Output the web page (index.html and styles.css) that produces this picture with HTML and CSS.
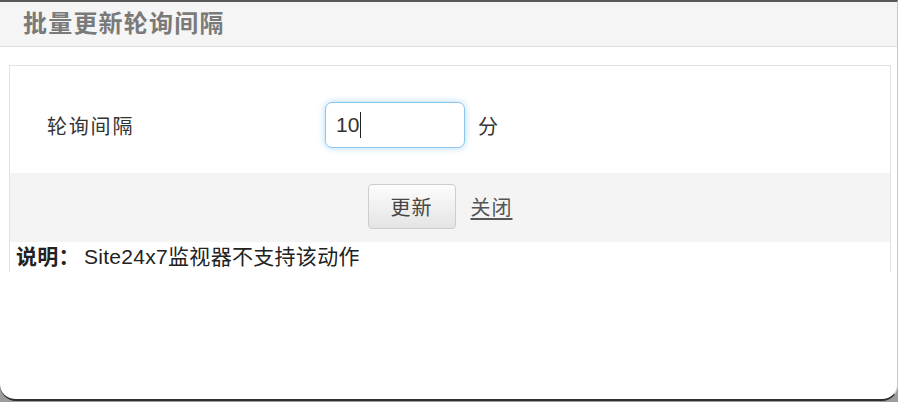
FILE: index.html
```html
<!DOCTYPE html>
<html lang="zh-CN">
<head>
<meta charset="utf-8">
<title>批量更新轮询间隔</title>
<link rel="stylesheet" href="styles.css">
</head>
<body>
<div class="dialog">
  <div class="header"><h1 class="title">批量更新轮询间隔</h1></div>
  <div class="panel">
    <div class="form-row">
      <div class="label">轮询间隔</div>
      <div class="field-wrap">
        <div class="field">10<span class="caret"></span></div>
        <span class="unit">分</span>
      </div>
    </div>
    <div class="actions">
      <button class="btn" type="button">更新</button>
      <a class="link" href="#">关闭</a>
    </div>
    <div class="note"><b>说明：</b>Site24x7监视器不支持该动作</div>
  </div>
</div>
</body>
</html>
```
FILE: styles.css
```css
html, body {
  margin: 0;
  padding: 0;
}
body {
  width: 898px;
  height: 402px;
  background: #9c9c9c;
  font-family: "Liberation Sans", "Noto Sans CJK SC", sans-serif;
  overflow: hidden;
}
.dialog {
  box-sizing: border-box;
  width: 898px;
  height: 401px;
  background: #fff;
  border-top: 2px solid #585858;
  border-right: 1px solid #c8c8c8;
  border-bottom: 2px solid #2e2e2e;
  border-radius: 0 0 16px 16px;
  overflow: hidden;
}
.header {
  box-sizing: border-box;
  height: 45px;
  background: #f5f5f5;
  border-bottom: 1px solid #dcdcdc;
  padding-left: 23px;
  display: flex;
  align-items: center;
}
.title {
  margin: 0;
  font-size: 24px;
  font-weight: bold;
  color: #7a7a7a;
  line-height: 1;
  letter-spacing: 1.2px;
}
.panel {
  box-sizing: border-box;
  width: 882px;
  margin: 18px 0 0 9px;
  border: 1px solid #e2e2e2;
  border-bottom: none;
  height: 207px;
}
.form-row {
  height: 107px;
  display: grid;
  grid-template-columns: 278px auto;
  align-items: start;
  padding-left: 37px;
}
.label {
  font-size: 20px;
  line-height: 28px;
  color: #333;
  letter-spacing: 1.8px;
  margin-top: 47px;
}
.field-wrap {
  display: flex;
  align-items: center;
  gap: 13px;
  margin-top: 36px;
}
.field {
  box-sizing: border-box;
  width: 140px;
  height: 46px;
  border: 1px solid #8cc6ee;
  border-radius: 7px;
  box-shadow: 0 0 7px rgba(82, 168, 236, 0.45);
  font-size: 21px;
  color: #333;
  padding-left: 10px;
  display: flex;
  align-items: center;
  background: #fff;
}
.caret {
  display: inline-block;
  width: 0;
  height: 26px;
  border-left: 1.5px solid #222;
  margin-left: 1px;
}
.unit {
  font-size: 20px;
  color: #333;
}
.actions {
  height: 69px;
  background: #f4f4f4;
  display: flex;
  align-items: center;
  justify-content: center;
  gap: 15px;
  padding-right: 20px;
}
.btn {
  box-sizing: border-box;
  width: 88px;
  height: 45px;
  border: 1px solid #cdcdcd;
  border-radius: 4px;
  background: linear-gradient(#fdfdfd, #e4e4e4);
  font-family: inherit;
  font-size: 20px;
  color: #444;
  padding: 0;
  margin-top: -3px;
  letter-spacing: 1px;
}
.link {
  font-size: 20px;
  color: #555;
  text-decoration: underline;
  text-underline-offset: 3px;
  margin-top: -3px;
  letter-spacing: 1px;
}
.note {
  height: 29px;
  padding-left: 6px;
  font-size: 21px;
  color: #222;
  line-height: 29px;
  letter-spacing: 0.3px;
  background: #fff;
}
.note b {
  font-weight: bold;
  margin-right: 4px;
}
```
